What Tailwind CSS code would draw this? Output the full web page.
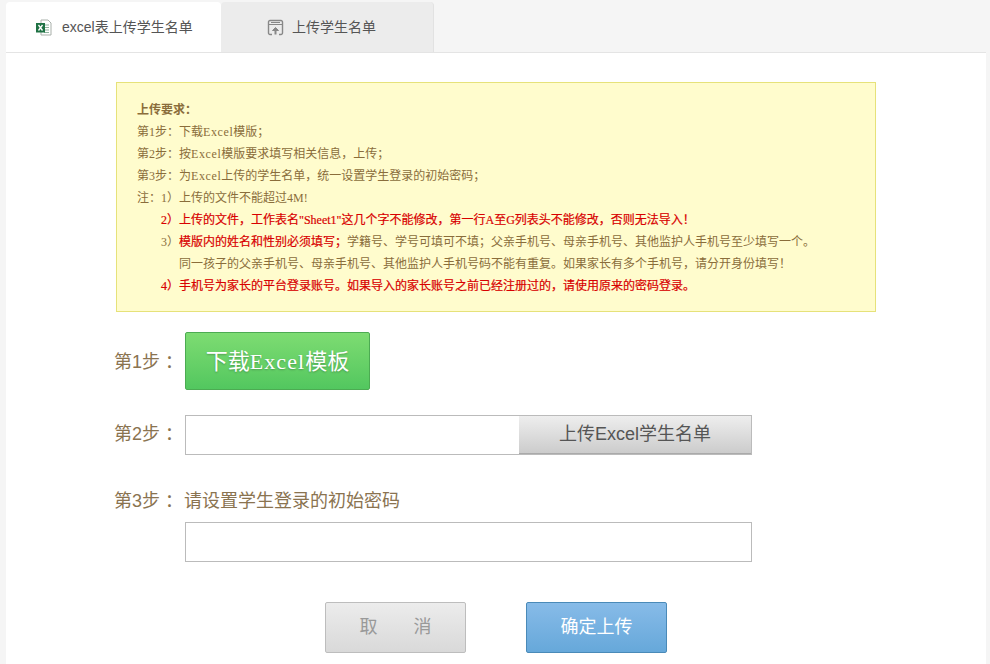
<!DOCTYPE html>
<html lang="zh">
<head>
<meta charset="utf-8">
<title>上传学生名单</title>
<script src="https://cdn.jsdelivr.net/npm/@tailwindcss/browser@4"></script>
</head>
<body class="bg-[#f5f5f5] h-[664px] overflow-hidden font-['Liberation_Sans','Noto_Sans_CJK_SC',sans-serif]">
<div class="flex pt-[2px] pl-[6px] h-[52px] relative z-10">
  <div class="w-[215px] h-[50px] bg-white rounded-t-[4px] flex items-center pl-[29px] text-[14px] text-[#555]">
    <svg class="w-[17px] h-[17px] mr-[10px]" viewBox="0 0 17 17">
      <path d="M6 1h7l3 3v12H6z" fill="#fff" stroke="#a9b0aa"/>
      <path d="M9 6h5M9 8.5h5M9 11h5M9 13.5h5" stroke="#8fb39d" stroke-width="1.2"/>
      <rect x="1" y="4" width="9" height="9.5" fill="#1f7244"/>
      <path d="M3.5 6l4 5.500M7.500 6l-4 5.500" stroke="#fff" stroke-width="1.300"/>
    </svg>
    <span>excel表上传学生名单</span>
  </div>
  <div class="w-[213px] h-[50px] bg-[#ececec] border-r border-[#e2e2e2] rounded-t-[4px] flex items-center pl-[46px] text-[14px] text-[#555]">
    <svg class="w-[17px] h-[17px] mr-[8px]" viewBox="0 0 17 17" fill="none" stroke="#888">
      <path d="M5 15.500H3a1.500 1.500 0 0 1-1.500-1.500V3A1.500 1.500 0 0 1 3 1.500h11A1.500 1.500 0 0 1 15.500 3v11a1.500 1.500 0 0 1-1.500 1.500h-2" stroke-width="1.400"/>
      <path d="M2 5.500h13M4 3.500h9" stroke-width="1.200"/>
      <path d="M8.500 15.500V10" stroke-width="2"/>
      <path d="M5.500 11.500l3-3 3 3z" fill="#888" stroke-width="1"/>
    </svg>
    <span>上传学生名单</span>
  </div>
</div>
<main class="mx-[6px] w-[980px] h-[612px] bg-white border-t border-[#e4e4e4] pt-[29px] pl-[110px]">
  <section class="w-[760px] h-[230px] bg-[#fffccd] border border-[#e6e27a] pt-[16px] pl-[20px] text-[12px] leading-[22px] text-[#8a6d3b]">
    <p class="h-[22px] font-bold">上传要求：</p>
    <p class="h-[22px]">第<span class="font-['Liberation_Serif']">1</span>步：下载<span class="font-['Liberation_Serif'] tracking-[0.6px]">Excel</span>模版；</p>
    <p class="h-[22px]">第<span class="font-['Liberation_Serif']">2</span>步：按<span class="font-['Liberation_Serif'] tracking-[0.6px]">Excel</span>模版要求填写相关信息，上传；</p>
    <p class="h-[22px]">第<span class="font-['Liberation_Serif']">3</span>步：为<span class="font-['Liberation_Serif'] tracking-[0.6px]">Excel</span>上传的学生名单，统一设置学生登录的初始密码；</p>
    <p class="h-[22px]">注：<span class="font-['Liberation_Serif']">1</span>）上传的文件不能超过<span class="font-['Liberation_Serif']">4M!</span></p>
    <p class="h-[22px] pl-[24px] text-[#d80000] [-webkit-text-stroke:0.2px]"><span class="font-['Liberation_Serif']">2</span>）上传的文件，工作表名<span class="font-['Liberation_Serif']">"Sheet1"</span>这几个字不能修改，第一行<span class="font-['Liberation_Serif']">A</span>至<span class="font-['Liberation_Serif']">G</span>列表头不能修改，否则无法导入！</p>
    <p class="h-[22px] pl-[24px]"><span class="font-['Liberation_Serif']">3</span>）<span class="text-[#d80000] [-webkit-text-stroke:0.2px]">模版内的姓名和性别必须填写；</span>学籍号、学号可填可不填；父亲手机号、母亲手机号、其他监护人手机号至少填写一个。</p>
    <p class="h-[22px] pl-[42px]">同一孩子的父亲手机号、母亲手机号、其他监护人手机号码不能有重复。如果家长有多个手机号，请分开身份填写！</p>
    <p class="h-[22px] pl-[24px] text-[#d80000] [-webkit-text-stroke:0.2px]"><span class="font-['Liberation_Serif']">4</span>）手机号为家长的平台登录账号。如果导入的家长账号之前已经注册过的，请使用原来的密码登录。</p>
  </section>

  <div class="flex items-center mt-[20px] h-[58px] text-[18px] text-[#8a7350]">
    <span class="w-[71px] -ml-[2px] mt-[2px] whitespace-nowrap">第1步<span class="ml-[5px]">：</span></span>
    <button class="w-[185px] h-[58px] rounded-[2px] border border-[#4cab52] bg-gradient-to-b from-[#7ddc72] to-[#52c75f] text-white text-[22px] [text-shadow:0_1px_2px_rgba(0,0,0,0.25)]">下载<span class="font-['Liberation_Serif'] tracking-[1.1px]">Excel</span>模板</button>
  </div>

  <div class="flex items-center mt-[25px] h-[40px] text-[18px] text-[#8a7350]">
    <span class="w-[71px] -ml-[2px] -mt-[2px] whitespace-nowrap">第2步<span class="ml-[5px]">：</span></span>
    <div class="w-[567px] h-[40px] border border-[#bbb] flex justify-end">
      <button class="w-[232px] h-full bg-gradient-to-b from-[#eeeeee] to-[#cccccc] text-[#555] border-b border-[#aaa]">上传Excel学生名单</button>
    </div>
  </div>

  <div class="flex items-center mt-[34px] h-[24px] text-[18px] text-[#8a7350]">
    <span class="w-[71px] -ml-[2px] whitespace-nowrap">第3步<span class="ml-[5px]">：</span></span>
    <span class="-ml-[1px]">请设置学生登录的初始密码</span>
  </div>
  <div class="ml-[69px] mt-[9px] w-[567px] h-[40px] border border-[#bbb]"></div>

  <div class="flex ml-[209px] mt-[40px] gap-[60px] text-[18px]">
    <button class="w-[141px] h-[51px] rounded-[2px] border border-[#bdbdbd] bg-gradient-to-b from-[#ececec] to-[#d9d9d9] text-[#999] whitespace-pre">取　　消</button>
    <button class="w-[141px] h-[51px] rounded-[2px] border border-[#4a8ab8] bg-gradient-to-b from-[#87bbe8] to-[#66a8da] text-white">确定上传</button>
  </div>
</main>
</body>
</html>
